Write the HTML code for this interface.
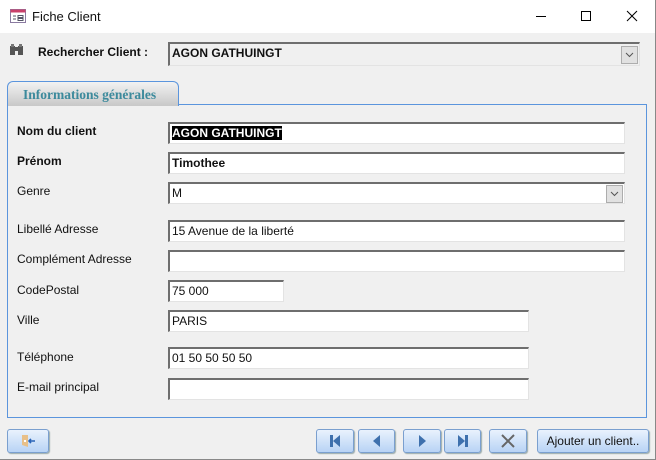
<!DOCTYPE html>
<html><head><meta charset="utf-8"><style>
*{box-sizing:border-box;margin:0;padding:0}
body{width:656px;height:460px;background:#f0f0f0;font-family:"Liberation Sans",sans-serif;font-size:12px;color:#111;position:relative;overflow:hidden}
.a{position:absolute}
.title{left:0;top:0;width:656px;height:33px;background:#fff}
.lbl{position:absolute;left:18px;font-size:12px}
.b{font-weight:bold}
.f{position:absolute;background:#fff;border-top:2px solid #6e6e6e;border-left:2px solid #6e6e6e;border-right:1px solid #e3e3e3;border-bottom:1px solid #e3e3e3;height:22px;padding:2px 0 0 2px;font-size:12px;white-space:nowrap}
.dd{position:absolute;right:1px;top:1px;width:17px;height:18px;background:#e1e1e1;border:1px solid #adadad}
.dd svg{position:absolute;left:3px;top:5px}
.btn{position:absolute;top:429px;height:24px;border:1px solid #7a9fcf;border-radius:3px;background:linear-gradient(#e9f2fd,#b8d3f5);box-shadow:1px 1px 1px #9aa}
.btn svg{position:absolute;left:50%;top:50%;transform:translate(-50%,-50%)}
</style></head><body>
<div class="a title"></div>
<div class="a" style="right:0;top:0;width:1px;height:460px;background:#888"></div>
<div class="a" style="left:0;bottom:0;width:656px;height:1px;background:#888"></div>
<svg class="a" style="left:10px;top:9px" width="16" height="14"><rect x="0.5" y="0.5" width="15" height="13" fill="#fff" stroke="#8a7aa0"/><rect x="0.5" y="0.5" width="15" height="3" fill="#c9406a"/><path d="M3 7h3M3 10h3M8 6.5h5v2h-5zM8 9.5h5v2h-5z" stroke="#556" fill="none"/></svg>
<div class="a" style="left:32px;top:9px;font-size:13px">Fiche Client</div>
<svg class="a" style="left:534px;top:10px" width="110" height="14"><path d="M2 6.5h10" stroke="#000"/><rect x="47.5" y="1.5" width="9" height="9" fill="none" stroke="#000"/><path d="M93 1l10 10M103 1l-10 10" stroke="#000"/></svg>
<svg class="a" style="left:9px;top:44px" width="16" height="12"><rect x="1" y="2" width="5" height="9" fill="#555"/><rect x="9" y="2" width="5" height="9" fill="#555"/><rect x="5" y="3" width="5" height="4" fill="#555"/><rect x="2" y="0" width="3" height="3" fill="#777"/><rect x="10" y="0" width="3" height="3" fill="#777"/></svg>
<div class="a b" style="left:38px;top:45px">Rechercher Client :</div>
<div class="f b" style="left:168px;top:42px;width:472px;height:24px;background:#f0f0f0">AGON GATHUINGT<div class="dd" style="top:2px"><svg width="9" height="6"><path d="M1 1l3.5 3.5L8 1" stroke="#555" fill="none"/></svg></div></div>
<div class="a" style="left:7px;top:104px;width:640px;height:314px;border:1px solid #5b95dd"></div>
<div class="a" style="left:7px;top:81px;width:172px;height:25px;border:1px solid #5b95dd;border-bottom:none;border-radius:6px 6px 0 0;background:linear-gradient(#f2f2f2,#c8c8c8)"></div>
<div class="a" style="left:23px;top:87px;font-family:'Liberation Serif',serif;font-weight:bold;font-size:13.5px;color:#3c8a9c">Informations générales</div>
<div class="lbl b" style="top:124px;left:17px">Nom du client</div>
<div class="f b" style="left:168px;top:122px;width:457px"><span style="background:#000;color:#fff">AGON GATHUINGT</span></div>
<div class="lbl b" style="top:154px;left:17px">Prénom</div>
<div class="f b" style="left:168px;top:152px;width:457px">Timothee</div>
<div class="lbl" style="top:184px;left:17px">Genre</div>
<div class="f" style="left:168px;top:182px;width:457px">M<div class="dd"><svg width="9" height="6"><path d="M1 1l3.5 3.5L8 1" stroke="#555" fill="none"/></svg></div></div>
<div class="lbl" style="top:222px;left:17px">Libellé Adresse</div>
<div class="f" style="left:168px;top:220px;width:457px">15 Avenue de la liberté</div>
<div class="lbl" style="top:252px;left:17px">Complément Adresse</div>
<div class="f" style="left:168px;top:250px;width:457px"></div>
<div class="lbl" style="top:283px;left:17px">CodePostal</div>
<div class="f" style="left:168px;top:280px;width:116px">75 000</div>
<div class="lbl" style="top:313px;left:17px">Ville</div>
<div class="f" style="left:168px;top:310px;width:361px">PARIS</div>
<div class="lbl" style="top:350px;left:17px">Téléphone</div>
<div class="f" style="left:168px;top:347px;width:361px">01 50 50 50 50</div>
<div class="lbl" style="top:380px;left:17px">E-mail principal</div>
<div class="f" style="left:168px;top:378px;width:361px"></div>
<div class="btn" style="left:7px;width:42px"><svg width="16" height="14"><path d="M2 1h6v12l-6-2z" fill="#e8c08a"/><rect x="4" y="6" width="2" height="2" fill="#fff"/><path d="M15 7h-6M11 5l-2 2 2 2" stroke="#2a64b8" stroke-width="1.6" fill="none"/></svg></div>
<div class="btn" style="left:316px;width:38px"><svg width="12" height="12"><rect x="1" y="0" width="3" height="12" fill="#3e70ad"/><path d="M11 0v12L4 6z" fill="#3e70ad"/></svg></div>
<div class="btn" style="left:358px;width:37px"><svg width="8" height="12"><path d="M7 0v12L0 6z" fill="#3e70ad"/></svg></div>
<div class="btn" style="left:403px;width:38px"><svg width="8" height="12"><path d="M1 0v12L8 6z" fill="#3e70ad"/></svg></div>
<div class="btn" style="left:444px;width:37px"><svg width="12" height="12"><path d="M1 0v12L8 6z" fill="#3e70ad"/><rect x="8" y="0" width="3" height="12" fill="#3e70ad"/></svg></div>
<div class="btn" style="left:489px;width:38px"><svg width="14" height="14"><path d="M1 1l12 12M13 1L1 13" stroke="#666" stroke-width="2"/></svg></div>
<div class="btn" style="left:537px;width:112px;text-align:center;line-height:22px;font-size:12px">Ajouter un client..</div>
</body></html>
